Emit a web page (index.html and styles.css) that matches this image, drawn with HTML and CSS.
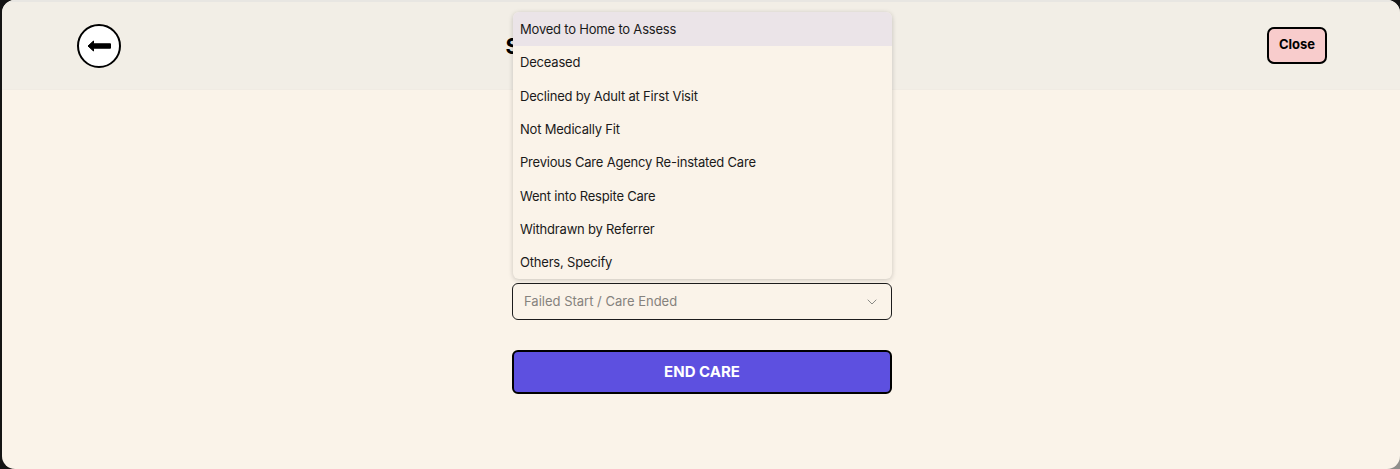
FILE: index.html
```html
<!DOCTYPE html>
<html lang="en">
<head>
<meta charset="utf-8">
<title>End Care</title>
<link rel="stylesheet" href="styles.css">
</head>
<body>
<div class="modal">
  <header class="header">
    <button class="back" aria-label="Back">
      <svg class="back-icon" viewBox="0 0 24 12" width="24" height="12"><path d="M1 6 L6.5 1 V3.8 H23.5 V8.2 H6.5 V11 Z" fill="#000" stroke="#000" stroke-width="1" stroke-linejoin="round"/></svg>
    </button>
    <h1 class="title">Select the Reason for Ending Care</h1>
    <button class="close">Close</button>
  </header>
  <main class="main">
    <div class="field">
      <ul class="menu">
        <li class="option active">Moved to Home to Assess</li>
        <li class="option">Deceased</li>
        <li class="option">Declined by Adult at First Visit</li>
        <li class="option">Not Medically Fit</li>
        <li class="option">Previous Care Agency Re-instated Care</li>
        <li class="option">Went into Respite Care</li>
        <li class="option">Withdrawn by Referrer</li>
        <li class="option">Others, Specify</li>
      </ul>
      <div class="select">
        <span class="placeholder">Failed Start / Care Ended</span>
        <svg class="chevron" viewBox="0 0 10 6" width="10" height="6"><path d="M0.7 0.7 L5 5 L9.3 0.7" fill="none" stroke="#8a8a86" stroke-width="1"/></svg>
      </div>
    </div>
    <button class="end">END CARE</button>
  </main>
</div>
</body>
</html>
```
FILE: styles.css
```css
* { box-sizing: border-box; }
html, body { height: 100%; }
body {
  margin: 0;
  padding-left: 2px;
  background: linear-gradient(#8f8f8c, #8f8f8c) right bottom / 40px 40px no-repeat, #141414;
  font-family: Inter, "Liberation Sans", sans-serif;
  overflow: hidden;
}
.modal {
  height: 469px;
  background: #faf3e9;
  border-radius: 13px;
  overflow: hidden;
}
.header {
  height: 90px;
  background: #f2eee6;
  border-top: 2px solid #e8e6e2;
  border-bottom: 1px solid #f0ebe3;
  padding: 0 73px 0 75px;
  display: flex;
  align-items: center;
  justify-content: space-between;
}
.back {
  width: 44px;
  height: 44px;
  border-radius: 50%;
  border: 2px solid #000;
  background: #fff;
  padding: 0;
  display: flex;
  align-items: center;
  justify-content: center;
}
.title {
  width: 377px;
  margin: 0;
  font-size: 22px;
  font-weight: 700;
  white-space: nowrap;
  color: #000;
}
.close {
  width: 60px;
  height: 37px;
  border: 2px solid #000;
  border-radius: 7px;
  background: #f8cccc;
  color: #000;
  font: 700 13px/1 Inter, "Liberation Sans", sans-serif;
  padding: 0 0 2px;
}
.main {
  width: 380px;
  margin-left: 510px;
  padding-top: 193px;
}
.field { position: relative; }
.menu {
  position: absolute;
  left: 1px;
  right: 0;
  bottom: 41px;
  margin: 0;
  padding: 0;
  list-style: none;
  background: #faf3e9;
  border-radius: 6px;
  overflow: hidden;
  box-shadow: 0 1px 5px rgba(0, 0, 0, 0.2);
}
.option {
  height: 33.35px;
  padding: 0 7px;
  display: flex;
  align-items: center;
  font-size: 13px;
  letter-spacing: -0.2px;
  color: #1a1a1a;
}
.option.active { background: #ebe4e8; }
.select {
  height: 37px;
  border: 1px solid #1c1c1c;
  border-radius: 6px;
  padding: 0 14px 0 11px;
  display: flex;
  align-items: center;
  justify-content: space-between;
  font-size: 13px;
  color: #85827d;
}
.placeholder { padding-bottom: 1px; }
.end {
  display: block;
  width: 100%;
  height: 44px;
  margin-top: 30px;
  border: 2px solid #000;
  border-radius: 6px;
  background: #5d50e0;
  color: #fff;
  font: 700 15px/1 Inter, "Liberation Sans", sans-serif;
  padding: 0 0 2px;
}
```
